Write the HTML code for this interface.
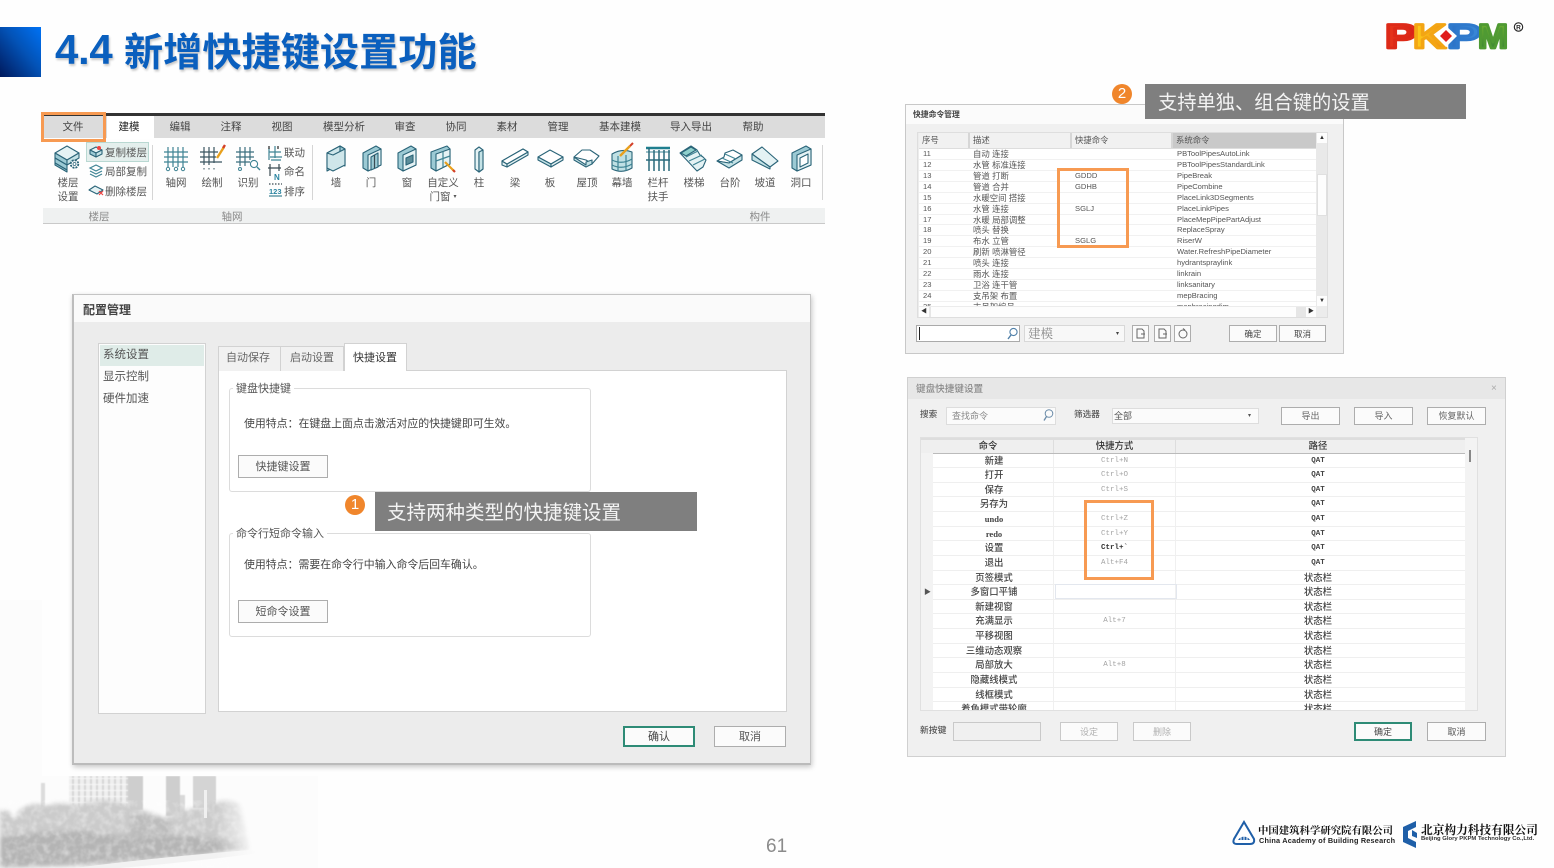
<!DOCTYPE html>
<html lang="zh-CN"><head><meta charset="utf-8"><title>4.4 新增快捷键设置功能</title>
<style>
*{box-sizing:border-box}
html,body{margin:0;padding:0;background:#fefefe}
body{width:1554px;height:868px;position:relative;overflow:hidden;font-family:"Liberation Sans","Noto Sans CJK SC",sans-serif;color:#444}
#w{position:absolute;left:0;top:0;width:1554px;height:868px;filter:blur(.35px)}
.a{position:absolute}
.t{position:absolute;white-space:nowrap;line-height:1}
.c{position:absolute;white-space:nowrap;line-height:1;transform:translateX(-50%)}
.tab{font-size:10.5px;top:122px;color:#444}
.lb{font-size:10.5px;color:#555}
.gl{font-size:10.5px;color:#8a8a8a;top:212px}
.btn{position:absolute;background:#fbfbfb;border:1px solid #adadad;display:flex;align-items:center;justify-content:center;line-height:1;color:#555;padding-top:1px}
.rib{position:absolute;left:0;top:0}
.rib .i{fill:#e4f2f4;stroke:#2a6478;stroke-width:1.1;stroke-linejoin:round}
.rib .d{fill:#9ccad4;stroke:#2a6478;stroke-width:1.1;stroke-linejoin:round}
.rib .m{fill:#c4e2e6;stroke:#2a6478;stroke-width:1.1;stroke-linejoin:round}
.rib .g{stroke:#3f8494;stroke-width:1.2;fill:none}
.rib .k{stroke:#3a4a52;stroke-width:1.2;fill:none}
.r2{display:flex;height:10.93px;font-size:7.6px;line-height:10.93px;border-bottom:1px solid #f1f1f1;color:#555;white-space:nowrap}
.r2 span{display:block;overflow:hidden}
.r2 span:nth-child(1){width:51px;padding-left:4px}
.r2 span:nth-child(2){width:102px;padding-left:3px;font-size:8.4px}
.r2 span:nth-child(3){width:101px;padding-left:3px}
.r2 span:nth-child(4){width:143px;padding-left:4px}
.r3{display:flex;height:14.63px;line-height:14px;font-size:9.4px;color:#444;border-bottom:1px solid #efefef;white-space:nowrap;text-align:center;font-weight:500}
.r3 b{display:block;width:121px;font-weight:500;border-right:1px solid #f0f0f0;padding-left:2px}
.r3 i{display:block;width:122px;font:7.5px/14px "Liberation Mono",monospace;color:#a3a3a3;border-right:1px solid #f0f0f0}
.r3 u{display:block;width:284px;text-decoration:none;color:#444}
.r3 u.q{font:bold 7.5px/14px "Liberation Mono",monospace}
.or{position:absolute;border:3px solid #f79a52}
.badge{position:absolute;width:20px;height:20px;border-radius:50%;background:#f0862c;color:#fff;font-size:15px;line-height:20px;text-align:center}
.lab{position:absolute;background:#7f7f7f;color:#f4f4f4;font-size:19.5px;white-space:nowrap;line-height:1}
</style></head><body>
<div id="w">

<!-- faint dotted background + city -->
<div class="a" style="left:0;top:600px;width:42px;height:176px;background:#fcfcfc"></div>
<svg class="a" style="left:0;top:776px" width="320" height="92" viewBox="0 776 320 92">
<defs>
<filter id="b1" x="-10%" y="-10%" width="120%" height="120%"><feGaussianBlur stdDeviation="2.2"/></filter>
<filter id="b2" x="-10%" y="-10%" width="120%" height="120%"><feGaussianBlur stdDeviation="0.6"/></filter>
<filter id="tx" x="0" y="0" width="100%" height="100%"><feTurbulence type="fractalNoise" baseFrequency="0.16" numOctaves="3" seed="4"/><feColorMatrix values="0 0 0 0 1  0 0 0 0 1  0 0 0 0 1  1.9 0 0 0 -0.75"/><feComposite in2="SourceAlpha" operator="in"/><feGaussianBlur stdDeviation="0.5"/></filter>
<linearGradient id="fd" x1="0" x2="1"><stop offset="0" stop-color="#fcfcfc" stop-opacity="0"/><stop offset="1" stop-color="#fcfcfc"/></linearGradient>
<pattern id="st" width="6" height="6" patternUnits="userSpaceOnUse"><rect width="6" height="6" fill="#efefef"/><rect width="2" height="6" fill="#d6d6d6"/><rect y="4" width="6" height="1" fill="#f8f8f8"/></pattern>
</defs>
<rect x="0" y="776" width="316" height="92" fill="#fcfcfc"/>
<g filter="url(#b2)">
<rect x="69" y="776" width="60" height="38" fill="url(#st)"/>
<rect x="128" y="776" width="15" height="34" fill="#cecece"/>
<rect x="166" y="776" width="14" height="40" fill="#cecece"/>
<rect x="180" y="795" width="5" height="22" fill="#d8d8d8"/>
<rect x="193" y="776" width="23" height="32" fill="#d4d4d4"/>
<rect x="41" y="783" width="4" height="24" fill="#dcdcdc"/>
</g>
<g filter="url(#b1)">
<path d="M0 810 Q10 808 14 820 L18 812 Q30 800 45 806 Q60 800 80 806 Q100 795 130 806 Q150 812 165 818 Q180 808 205 808 Q225 795 240 805 L250 848 Q170 862 100 866 L0 868Z" fill="#cbcbcb"/>
<path d="M0 838 Q60 825 120 836 Q180 832 240 842 L250 850 Q170 858 100 862 L0 868Z" fill="#b4b4b4"/>
<path d="M130 815 Q150 812 170 822 L170 838 L130 838Z" fill="#bcbcbc"/>
</g>
<rect x="0" y="800" width="255" height="68" fill="#bbb" opacity=".45" filter="url(#tx)"/>
<path d="M75 868 Q150 858 250 850 L260 853 Q190 862 120 868Z" fill="#f2f2f2"/>
<rect x="204" y="790" width="3" height="28" fill="#f0f0f0"/>
<rect x="215" y="776" width="43" height="92" fill="url(#fd)"/>
<rect x="258" y="776" width="60" height="92" fill="#fcfcfc"/>
</svg>

<!-- title -->
<div class="a" style="left:0;top:27px;width:41px;height:50px;background:linear-gradient(to top right,#00195c 0%,#0352b6 55%,#0072f5 100%)"></div>
<div class="t" style="left:55px;top:28px;font-size:42px;font-weight:700;color:#0a5fbe;text-shadow:1px 2px 2px rgba(0,0,0,.22);letter-spacing:-.3px;line-height:44px">4.4</div>
<div class="t" style="left:124px;top:28px;font-size:39.2px;font-weight:700;color:#0a5fbe;text-shadow:1px 2px 2px rgba(0,0,0,.22);line-height:44px;font-family:'Noto Sans CJK SC',sans-serif">新增快捷键设置功能</div>

<!-- PKPM logo -->
<svg class="a" style="left:1380px;top:14px" width="160" height="42" viewBox="1380 14 160 42">
<defs>
<linearGradient id="l1" x1="0" x2="1"><stop offset="0" stop-color="#e8381c"/><stop offset="1" stop-color="#d81f16"/></linearGradient>
<linearGradient id="l2" x1="0" x2="1"><stop offset="0" stop-color="#ffd21a"/><stop offset="1" stop-color="#ef8a12"/></linearGradient>
<linearGradient id="l3" x1="0" x2="1"><stop offset="0" stop-color="#2a6fc4"/><stop offset="1" stop-color="#3a8bd8"/></linearGradient>
<linearGradient id="l4" x1="0" y1="0" x2="0" y2="1"><stop offset="0" stop-color="#76b832"/><stop offset="1" stop-color="#2f7a34"/></linearGradient>
</defs>
<g font-family="Liberation Sans" font-weight="700" font-size="34.500" stroke-width="2.800" stroke-linejoin="round">
<text x="1385" y="48" fill="url(#l1)" stroke="#dd2a18" textLength="32" lengthAdjust="spacingAndGlyphs">P</text>
<text x="1413" y="48" fill="url(#l2)" stroke="#f3a514" textLength="33" lengthAdjust="spacingAndGlyphs">K</text>
<text x="1447" y="48" fill="url(#l3)" stroke="#2f79cc" textLength="34" lengthAdjust="spacingAndGlyphs">P</text>
<text x="1478" y="48" fill="url(#l4)" stroke="#4f9a33" textLength="30" lengthAdjust="spacingAndGlyphs">M</text>
</g>
<path d="M1446 26 L1457 36 L1446 47 L1435 36Z" fill="#fff"/>
<path d="M1446 30 L1452 36 L1446 42 L1440 36Z" fill="#e01d1d"/>
<circle cx="1518.5" cy="27" r="4.2" fill="none" stroke="#222" stroke-width="1.1"/>
<text x="1518.5" y="29.4" font-family="Liberation Sans" font-size="6.5" font-weight="700" fill="#222" text-anchor="middle">R</text>
</svg>

<!-- ribbon -->
<div class="a" style="left:43px;top:113px;width:782px;height:3px;background:#333"></div>
<div class="a" style="left:43px;top:116px;width:782px;height:22px;background:#dcdcdc"></div>
<div class="a" style="left:107px;top:116px;width:47px;height:23px;background:#fff"></div>
<div class="a" style="left:43px;top:208px;width:782px;height:16px;background:#eff1f1;border-bottom:1px solid #c9c9c9"></div>
<div class="a" style="left:41px;top:112px;width:65px;height:30px;border:3px solid #f79a52;background:transparent"></div>
<div class="c tab" style="left:73px">文件</div>
<div class="c tab" style="left:129px;color:#222">建模</div>
<div class="c tab" style="left:180px">编辑</div>
<div class="c tab" style="left:231px">注释</div>
<div class="c tab" style="left:282px">视图</div>
<div class="c tab" style="left:344px">模型分析</div>
<div class="c tab" style="left:405px">审查</div>
<div class="c tab" style="left:456px">协同</div>
<div class="c tab" style="left:507px">素材</div>
<div class="c tab" style="left:558px">管理</div>
<div class="c tab" style="left:620px">基本建模</div>
<div class="c tab" style="left:691px">导入导出</div>
<div class="c tab" style="left:753px">帮助</div>

<div class="a" style="left:86px;top:142px;width:63px;height:20px;background:#e4efed;border:1px solid #b9d8d2"></div>
<div class="a" style="left:152px;top:145px;width:1px;height:55px;background:#d5d5d5"></div>
<div class="a" style="left:312px;top:145px;width:1px;height:55px;background:#d5d5d5"></div>
<div class="a" style="left:822px;top:145px;width:1px;height:55px;background:#d5d5d5"></div>

<svg class="rib" width="1554" height="230">
<!-- floor settings -->
<path class="i" d="M55 153 L67 146 L79 153 L67 160Z"/>
<path class="d" d="M55 153 L67 160 V165 L55 158Z"/><path class="m" d="M67 160 L79 153 V158 L67 165Z"/>
<path class="d" d="M55 158 L67 165 V170 L55 163Z"/>
<path class="d" d="M55 163 L67 170 V172 L55 165Z"/>
<circle cx="74.500" cy="164" r="3.800" fill="#fff" stroke="#2a6478" stroke-width="1.800" stroke-dasharray="2 1"/><circle cx="74.500" cy="164" r="1.500" fill="#fff" stroke="#2a6478" stroke-width=".8"/>
<!-- small floor icons -->
<path class="i" d="M90 150 L96 147 L102 150 L96 153Z"/><path class="d" d="M90 150 V154 L96 157 V153Z"/><path class="m" d="M96 157 L102 154 V150 L96 153Z"/><circle cx="99" cy="148" r="2" fill="#e44"/>
<path class="g" d="M90 168 L96 165 L102 168 L96 171Z M90 171 L96 174 L102 171 M90 174 L96 177 L102 174"/>
<path class="i" d="M89 190 L95 186 L103 190 L97 194Z"/><path stroke="#e44" stroke-width="1.200" d="M99 191 L103 195 M103 191 L99 195"/>
<!-- grids -->
<g class="g"><path d="M164 152 H188 M164 157 H188 M164 162 H188 M168 147 V167 M173 147 V167 M178 147 V167 M183 147 V167" stroke-dasharray="none"/></g>
<g fill="none" stroke="#3f8494" stroke-width="1"><circle cx="168" cy="169" r="1.700"/><circle cx="176" cy="169" r="1.700"/><circle cx="183" cy="169" r="1.700"/></g>
<path class="g" style="stroke:#3a5560" d="M200 152 H218 M200 157 H216 M200 162 H222 M204 147 V165 M209 147 V165 M214 147 V163"/>
<path d="M217 158 L224 147" stroke="#e8a01c" stroke-width="2.400"/><path d="M223 148 L225 145" stroke="#d3402a" stroke-width="2.400"/>
<path d="M204 168 v1.500 M209 168 v1.500 M214 168 v1.500" stroke="#3a5560"/>
<path class="g" style="stroke:#3a6e7e" d="M236 152 H254 M236 157 H254 M236 162 H250 M240 147 V166 M245 147 V166 M250 147 V160"/>
<circle cx="254" cy="164" r="3.600" fill="#fff" stroke="#3f8494" stroke-width="1.100"/><path d="M257 167 L260 170" stroke="#3f8494" stroke-width="1.400"/>
<circle cx="240" cy="169" r="1.500" fill="none" stroke="#3f8494"/>
<!-- link/name/order -->
<path class="g" d="M269 148 v12 M275 146 v12 M269 152 h12 M270 157 h12 M271 160 h10"/>
<path d="M269 146 v3 M278 146 v3" stroke="#222" stroke-width="1.200"/>
<path class="k" d="M270 164 v12 M279 164 v7 M268 168 h13"/><text x="274" y="180" font-family="Liberation Sans" font-size="8" font-weight="700" fill="#2a84a0">N</text>
<path class="k" stroke-dasharray="1.500 1.500" d="M269 184 H282"/><text x="269" y="194" font-family="Liberation Sans" font-size="7.500" font-weight="700" fill="#2a84a0">123</text><path class="g" d="M269 196 H282"/>
<!-- wall -->
<path class="m" d="M327 153 L340 146 L345 149 L332 156Z"/><path class="i" style="fill:#cfe6ea" d="M327 153 L340 146 V164 L327 171Z"/><path class="d" d="M340 146 L345 149 V166 L340 164Z"/><path class="i" style="fill:#cfe6ea" d="M327 153 L327 168 L333 171 L345 165 V149 L333 155Z"/>
<!-- door -->
<path class="d" d="M363 153 L376 146 L381 149 V165 L368 171 L363 168Z"/><path class="i" d="M368 155 L381 149 V165 L368 171Z"/><path class="d" d="M371 157 L378 153 V167 L371 170Z"/><path class="k" d="M374.500 155 V168"/>
<!-- window -->
<path class="d" d="M398 153 L411 146 L416 149 V165 L403 171 L398 168Z"/><path class="i" d="M403 155 L416 149 V165 L403 171Z"/><path class="d" style="fill:#5c8e9a" d="M406 158 L413 155 V162 L406 165Z"/>
<!-- custom -->
<path class="d" d="M431 152 L447 146 L450 149 V164 L436 171 L431 168Z"/><path class="i" d="M436 154 L450 149 V164 L436 171Z"/><path class="g" d="M443 151.500 V167.500 M436 161 L450 156"/><path d="M445 162 L454 171" stroke="#e8a01c" stroke-width="2.200"/><path d="M453 170 L455 172" stroke="#d3402a" stroke-width="2.200"/>
<!-- column -->
<path class="i" d="M475 150 L479 147 L483 150 V169 L479 172 L475 169Z"/><path class="k" style="stroke:#2a6478" d="M479 152 V172"/><path class="m" d="M479 152 L483 150 V169 L479 172Z"/>
<!-- beam -->
<path class="m" d="M502 161 L523 149 L528 152 L507 164Z"/><path class="i" d="M502 161 L507 164 V167 L502 165Z"/><path class="i" d="M507 164 L528 152 V155 L507 167Z"/><path class="i" style="fill:#fff" d="M502 161 L523 149 L528 152 L507 164Z"/>
<!-- slab -->
<path class="i" style="fill:#fff" d="M538 157 L550 150 L563 157 L551 164Z"/><path class="m" d="M538 157 L551 164 V167 L538 160Z"/><path class="i" d="M551 164 L563 157 V160 L551 167Z"/>
<!-- roof -->
<path class="i" style="fill:#fff" d="M574 157 L582 150 L590 150 L599 156 L592 164 L586 160 Z"/><path class="m" d="M574 157 L586 165 L586 162 L592 160 V164 L586 167 L574 160Z"/>
<!-- curtain wall -->
<path class="i" style="fill:#bfe0e4" d="M612 154 Q622 148 632 152 V168 Q622 174 612 169Z"/><path class="g" d="M612 160 Q622 165 632 159 M612 165 Q622 170 632 164 M618 156 V171 M626 155 V171"/><path d="M620 156 L630 146" stroke="#e8a01c" stroke-width="2.400"/><path d="M630 146 L633 143" stroke="#d3402a" stroke-width="2"/>
<!-- railing -->
<path d="M646 148 H670" stroke="#1f7f8f" stroke-width="2.400"/><path d="M646 152 H670" stroke="#3f8494"/><path class="g" style="stroke-width:1.500;stroke:#2a6a7c" d="M649 148 V171 M654 150 V171 M659 150 V171 M664 150 V171 M669 150 V171 M646 160 H670"/>
<!-- stairs -->
<path class="i" d="M680 153 L691 146 L697 150 L700 155 L703 157 L706 160 L703 167 L697 171Z"/><path class="d" style="fill:#8fd0cc" d="M681 153 L691 147 L696 150 L686 156Z"/><path class="g" d="M686 157 L698 151 M689 161 L702 155 M693 165 L705 159"/>
<!-- steps -->
<path class="i" style="fill:#fff" d="M717 161 L724 157 L725 153 L733 150 L742 155 L729 163Z"/><path class="m" d="M717 161 L729 168 L742 160 V155 L729 163Z"/>
<path class="g" d="M722 158 L733 163 M725 154 L736 159"/>
<!-- ramp -->
<path class="i" d="M752 154 L762 147 L778 161 L770 167Z"/><path class="m" d="M752 154 L770 167 L770 169 L752 160Z"/>
<!-- opening -->
<path class="d" d="M792 153 L806 146 L811 149 V165 L797 171 L792 168Z"/><path class="i" d="M797 155 L811 149 V165 L797 171Z"/><path class="m" style="fill:#fff" d="M800 158 L808 154 V163 L800 167Z"/>
</svg>

<div class="c lb" style="left:68px;top:178px">楼层</div><div class="c lb" style="left:68px;top:192px">设置</div>
<div class="t lb" style="left:105px;top:147.5px">复制楼层</div>
<div class="t lb" style="left:105px;top:166.5px">局部复制</div>
<div class="t lb" style="left:105px;top:186.5px">删除楼层</div>
<div class="c lb" style="left:176px;top:178px">轴网</div>
<div class="c lb" style="left:212px;top:178px">绘制</div>
<div class="c lb" style="left:248px;top:178px">识别</div>
<div class="t lb" style="left:284px;top:147.5px">联动</div>
<div class="t lb" style="left:284px;top:166.5px">命名</div>
<div class="t lb" style="left:284px;top:186.5px">排序</div>
<div class="c lb" style="left:336px;top:178px">墙</div>
<div class="c lb" style="left:371px;top:178px">门</div>
<div class="c lb" style="left:407px;top:178px">窗</div>
<div class="c lb" style="left:443px;top:178px">自定义</div><div class="c lb" style="left:443px;top:192px">门窗 <span style="font-size:6px;vertical-align:2px">▾</span></div>
<div class="c lb" style="left:479px;top:178px">柱</div>
<div class="c lb" style="left:515px;top:178px">梁</div>
<div class="c lb" style="left:550px;top:178px">板</div>
<div class="c lb" style="left:587px;top:178px">屋顶</div>
<div class="c lb" style="left:622px;top:178px">幕墙</div>
<div class="c lb" style="left:658px;top:178px">栏杆</div><div class="c lb" style="left:658px;top:192px">扶手</div>
<div class="c lb" style="left:694px;top:178px">楼梯</div>
<div class="c lb" style="left:730px;top:178px">台阶</div>
<div class="c lb" style="left:765px;top:178px">坡道</div>
<div class="c lb" style="left:801px;top:178px">洞口</div>
<div class="c gl" style="left:99px">楼层</div><div class="c gl" style="left:232px">轴网</div><div class="c gl" style="left:760px">构件</div>

<!-- dialog 1 -->
<div class="a" style="left:72px;top:294px;width:739px;height:471px;background:#ececec;border:1px solid #c4c4c4;border-left:2px solid #bdbdbd;border-bottom:2px solid #bbb;box-shadow:1px 2px 5px rgba(0,0,0,.22)"></div>
<div class="a" style="left:74px;top:295px;width:736px;height:27px;background:#fafafa"></div>
<div class="t" style="left:83px;top:304px;font-size:12px;font-weight:700;color:#444">配置管理</div>
<div class="a" style="left:98px;top:343px;width:108px;height:371px;background:#fdfdfd;border:1px solid #d2d2d2"></div>
<div class="a" style="left:100px;top:345px;width:104px;height:21px;background:#dfece8"></div>
<div class="t" style="left:103px;top:350px;font-size:11.5px;color:#555">系统设置</div>
<div class="t" style="left:103px;top:372px;font-size:11.5px;color:#555">显示控制</div>
<div class="t" style="left:103px;top:394px;font-size:11.5px;color:#555">硬件加速</div>
<div class="a" style="left:218px;top:370px;width:569px;height:342px;background:#fff;border:1px solid #d2d2d2"></div>
<div class="a" style="left:218px;top:346px;width:63px;height:25px;background:#f1f1f1;border:1px solid #d2d2d2;border-bottom:0"></div>
<div class="a" style="left:281px;top:346px;width:63px;height:25px;background:#f1f1f1;border:1px solid #d2d2d2;border-bottom:0;border-left:0"></div>
<div class="a" style="left:344px;top:343px;width:63px;height:28px;background:#fff;border:1px solid #d2d2d2;border-bottom:0"></div>
<div class="c" style="left:248px;top:353px;font-size:11px;color:#666">自动保存</div>
<div class="c" style="left:312px;top:353px;font-size:11px;color:#666">启动设置</div>
<div class="c" style="left:375px;top:353px;font-size:11px;color:#333">快捷设置</div>

<div class="a" style="left:229px;top:388px;width:362px;height:104px;border:1px solid #dcdcdc;border-radius:3px"></div>
<div class="t" style="left:233px;top:384px;background:#fff;padding:0 3px;font-size:11px;color:#555">键盘快捷键</div>
<div class="t" style="left:244px;top:419px;font-size:10.9px;color:#444">使用特点：在键盘上面点击激活对应的快捷键即可生效。</div>
<div class="btn" style="left:238px;top:455px;width:90px;height:23px;font-size:11px">快捷键设置</div>

<div class="a" style="left:229px;top:533px;width:362px;height:104px;border:1px solid #dcdcdc;border-radius:3px"></div>
<div class="t" style="left:233px;top:529px;background:#fff;padding:0 3px;font-size:11px;color:#555">命令行短命令输入</div>
<div class="t" style="left:244px;top:560px;font-size:10.9px;color:#444">使用特点：需要在命令行中输入命令后回车确认。</div>
<div class="btn" style="left:238px;top:600px;width:90px;height:23px;font-size:11px">短命令设置</div>

<div class="btn" style="left:623px;top:726px;width:72px;height:21px;font-size:11px;border:2px solid #2e8b76;color:#444;padding-top:2px">确认</div>
<div class="btn" style="left:714px;top:726px;width:72px;height:21px;font-size:11px;padding-top:2px">取消</div>

<div class="badge" style="left:345px;top:495px">1</div>
<div class="lab" style="left:375px;top:492px;width:322px;height:39px;padding:12px 0 0 12px">支持两种类型的快捷键设置</div>

<!-- dialog 2 -->
<div class="a" style="left:905px;top:104px;width:439px;height:250px;background:#f0f0f0;border:1px solid #c8c8c8"></div>
<div class="a" style="left:906px;top:105px;width:437px;height:19px;background:#fbfbfb"></div>
<div class="t" style="left:913px;top:111px;font-size:7.8px;font-weight:700;color:#444">快捷命令管理</div>
<div class="a" style="left:917px;top:132px;width:411px;height:186px;background:#ececec;border:1px solid #dedede"></div>
<div class="a" style="left:919px;top:133px;width:397px;height:173px;background:#fff;overflow:hidden">
 <div style="display:flex;height:16px;font-size:8.4px;line-height:15px;color:#555;background:#f1f1f1;border-bottom:1px solid #ddd">
  <div style="width:51px;padding-left:3px;border-right:2px solid #d6d6d6">序号</div><div style="width:102px;padding-left:3px;border-right:2px solid #d6d6d6">描述</div><div style="width:101px;padding-left:3px;border-right:2px solid #d6d6d6">快捷命令</div><div style="width:143px;padding-left:3px;background:#c9c9c9">系统命令</div>
 </div>
 <div class="r2"><span>11</span><span>自动 连接</span><span></span><span>PBToolPipesAutoLink</span></div>
 <div class="r2"><span>12</span><span>水管 标准连接</span><span></span><span>PBToolPipesStandardLink</span></div>
 <div class="r2"><span>13</span><span>管道 打断</span><span>GDDD</span><span>PipeBreak</span></div>
 <div class="r2"><span>14</span><span>管道 合并</span><span>GDHB</span><span>PipeCombine</span></div>
 <div class="r2"><span>15</span><span>水暖空间 搭接</span><span></span><span>PlaceLink3DSegments</span></div>
 <div class="r2"><span>16</span><span>水管 连接</span><span>SGLJ</span><span>PlaceLinkPipes</span></div>
 <div class="r2"><span>17</span><span>水暖 局部调整</span><span></span><span>PlaceMepPipePartAdjust</span></div>
 <div class="r2"><span>18</span><span>喷头 替换</span><span></span><span>ReplaceSpray</span></div>
 <div class="r2"><span>19</span><span>布水 立管</span><span>SGLG</span><span>RiserW</span></div>
 <div class="r2"><span>20</span><span>刷新 喷淋管径</span><span></span><span>Water.RefreshPipeDiameter</span></div>
 <div class="r2"><span>21</span><span>喷头 连接</span><span></span><span>hydrantspraylink</span></div>
 <div class="r2"><span>22</span><span>雨水 连接</span><span></span><span>linkrain</span></div>
 <div class="r2"><span>23</span><span>卫浴 连干管</span><span></span><span>linksanitary</span></div>
 <div class="r2"><span>24</span><span>支吊架 布置</span><span></span><span>mepBracing</span></div>
 <div class="r2"><span>25</span><span>支吊架编号</span><span></span><span>mepbracingdim</span></div>
</div>
<div class="a" style="left:1316px;top:133px;width:11px;height:173px;background:#e9e9e9"></div>
<div class="a" style="left:1317px;top:133px;width:10px;height:10px;background:#fdfdfd;font-size:6px;line-height:10px;text-align:center;color:#333">▲</div>
<div class="a" style="left:1317px;top:296px;width:10px;height:10px;background:#fdfdfd;font-size:6px;line-height:10px;text-align:center;color:#333">▼</div>
<div class="a" style="left:1317px;top:174px;width:10px;height:42px;background:#fdfdfd;border:1px solid #e0e0e0"></div>
<div class="a" style="left:919px;top:307px;width:397px;height:10px;background:#e6e6e6"></div>
<div class="a" style="left:931px;top:307px;width:365px;height:10px;background:#fdfdfd"></div>
<div class="a" style="left:919px;top:307px;width:10px;height:10px;background:#fdfdfd;font-size:6px;line-height:10px;text-align:center;color:#333">◀</div>
<div class="a" style="left:1306px;top:307px;width:10px;height:10px;background:#fdfdfd;font-size:6px;line-height:10px;text-align:center;color:#333">▶</div>
<div class="a" style="left:916px;top:325px;width:104px;height:17px;background:#fff;border:1px solid #aaa"></div>
<div class="a" style="left:919px;top:327px;width:1px;height:13px;background:#222"></div>
<svg class="a" style="left:1006px;top:327px" width="13" height="13"><circle cx="7.500" cy="5" r="3.600" fill="none" stroke="#4f7fa8" stroke-width="1.100"/><path d="M5 8 L2 12" stroke="#4f7fa8" stroke-width="1.400"/></svg>
<div class="a" style="left:1024px;top:325px;width:101px;height:17px;background:#f8f8f8;border:1px solid #d8d8d8"></div>
<div class="t" style="left:1028px;top:327px;font-size:12.5px;color:#888;font-family:'Noto Serif CJK SC',serif">建模</div>
<div class="t" style="left:1116px;top:331px;font-size:6px;color:#444">▾</div>
<div class="btn" style="left:1132px;top:325px;width:17px;height:17px"></div>
<div class="btn" style="left:1154px;top:325px;width:17px;height:17px"></div>
<div class="btn" style="left:1174px;top:325px;width:17px;height:17px"></div>
<svg class="a" style="left:1132px;top:325px" width="60" height="17" fill="none" stroke="#666" stroke-width="1"><path d="M5 4 H10 L12 6 V13 H5Z M9 9 H13"/><path d="M27 4 H32 L34 6 V13 H27Z M31 9 H35"/><circle cx="51" cy="9" r="4"/><path d="M51 3.500 L53 5"/></svg>
<div class="btn" style="left:1229px;top:325px;width:48px;height:17px;font-size:8.5px;color:#444">确定</div>
<div class="btn" style="left:1279px;top:325px;width:47px;height:17px;font-size:8.5px;color:#444">取消</div>
<div class="or" style="left:1057px;top:168px;width:72px;height:80px"></div>
<div class="badge" style="left:1112px;top:84px">2</div>
<div class="lab" style="left:1145px;top:84px;width:321px;height:35px;padding:10px 0 0 13px;font-size:19.25px">支持单独、组合键的设置</div>

<!-- dialog 3 -->
<div class="a" style="left:907px;top:377px;width:599px;height:380px;background:#f0f0f0;border:1px solid #d0d0d0"></div>
<div class="a" style="left:908px;top:378px;width:597px;height:21px;background:#e7e7e7"></div>
<div class="t" style="left:916px;top:385px;font-size:9.6px;color:#8a8a8a;font-weight:500">键盘快捷键设置</div>
<div class="t" style="left:1491px;top:384px;font-size:10px;color:#aaa">×</div>
<div class="t" style="left:920px;top:410px;font-size:8.6px;color:#555;font-weight:500">搜索</div>
<div class="a" style="left:946px;top:407px;width:110px;height:18px;background:#fbfbfb;border:1px solid #ddd"></div>
<div class="t" style="left:952px;top:412px;font-size:9px;color:#888">查找命令</div>
<svg class="a" style="left:1041px;top:408px" width="14" height="14"><circle cx="8" cy="5.500" r="3.800" fill="none" stroke="#6a8ba8" stroke-width="1"/><path d="M5.500 8.500 L3 12.500" stroke="#6a8ba8" stroke-width="1.300"/></svg>
<div class="t" style="left:1074px;top:410px;font-size:8.6px;color:#555;font-weight:500">筛选器</div>
<div class="a" style="left:1112px;top:408px;width:147px;height:16px;background:#fbfbfb;border:1px solid #ddd"></div>
<div class="t" style="left:1114px;top:412px;font-size:9px;color:#555">全部</div>
<div class="t" style="left:1248px;top:413px;font-size:6px;color:#555">▾</div>
<div class="btn" style="left:1281px;top:407px;width:59px;height:18px;font-size:9px;color:#666">导出</div>
<div class="btn" style="left:1354px;top:407px;width:59px;height:18px;font-size:9px;color:#666">导入</div>
<div class="btn" style="left:1427px;top:407px;width:59px;height:18px;font-size:9px;color:#666">恢复默认</div>

<div class="a" style="left:920px;top:437px;width:558px;height:274px;background:#f3f3f3;border:1px solid #e0e0e0"></div>
<div class="a" style="left:921px;top:438px;width:544px;height:272px;background:#fff;overflow:hidden">
 <div style="display:flex;height:15.5px;background:#efefef;border-top:2px solid #ddd;border-bottom:1px solid #bbb;font-size:9.4px;line-height:12px;text-align:center;color:#333;font-weight:500">
  <div style="width:133px;border-right:1px solid #ddd;padding-left:2px">命令</div><div style="width:122px;border-right:1px solid #ddd">快捷方式</div><div style="width:284px">路径</div>
 </div>
 <div style="position:absolute;left:0;top:15px;width:12px;height:258px;background:#f3f3f3"></div>
 <div style="position:absolute;left:3px;top:151px;font-size:7px;line-height:1;color:#555">▶</div>
 <div style="position:absolute;left:134px;top:146px;width:122px;height:15px;border:1px solid #e3e7ee"></div>
 <div style="margin-left:12px">
 <div class="r3"><b>新建</b><i>Ctrl+N</i><u class="q">QAT</u></div>
 <div class="r3"><b>打开</b><i>Ctrl+O</i><u class="q">QAT</u></div>
 <div class="r3"><b>保存</b><i>Ctrl+S</i><u class="q">QAT</u></div>
 <div class="r3"><b>另存为</b><i></i><u class="q">QAT</u></div>
 <div class="r3"><b style="font:bold 8.5px/14px 'Liberation Serif',serif">undo</b><i>Ctrl+Z</i><u class="q">QAT</u></div>
 <div class="r3"><b style="font:bold 8.5px/14px 'Liberation Serif',serif">redo</b><i>Ctrl+Y</i><u class="q">QAT</u></div>
 <div class="r3"><b>设置</b><i style="color:#333;font-weight:700">Ctrl+`</i><u class="q">QAT</u></div>
 <div class="r3"><b>退出</b><i>Alt+F4</i><u class="q">QAT</u></div>
 <div class="r3"><b>页签模式</b><i></i><u>状态栏</u></div>
 <div class="r3"><b>多窗口平铺</b><i></i><u>状态栏</u></div>
 <div class="r3"><b>新建视窗</b><i></i><u>状态栏</u></div>
 <div class="r3"><b>充满显示</b><i>Alt+7</i><u>状态栏</u></div>
 <div class="r3"><b>平移视图</b><i></i><u>状态栏</u></div>
 <div class="r3"><b>三维动态观察</b><i></i><u>状态栏</u></div>
 <div class="r3"><b>局部放大</b><i>Alt+8</i><u>状态栏</u></div>
 <div class="r3"><b>隐藏线模式</b><i></i><u>状态栏</u></div>
 <div class="r3"><b>线框模式</b><i></i><u>状态栏</u></div>
 <div class="r3"><b>着色模式带轮廓</b><i></i><u>状态栏</u></div>
 </div>
</div>
<div class="a" style="left:1469px;top:450px;width:2px;height:12px;background:#888"></div>
<div class="or" style="left:1084px;top:500px;width:70px;height:80px"></div>
<div class="t" style="left:920px;top:726px;font-size:8.8px;color:#555;font-weight:500">新按键</div>
<div class="a" style="left:953px;top:722px;width:88px;height:19px;background:#f0f0f0;border:1px solid #c9c9c9"></div>
<div class="btn" style="left:1060px;top:722px;width:58px;height:19px;font-size:9px;color:#b0b0b0;border-color:#c9c9c9">设定</div>
<div class="btn" style="left:1133px;top:722px;width:58px;height:19px;font-size:9px;color:#b0b0b0;border-color:#c9c9c9">删除</div>
<div class="btn" style="left:1354px;top:722px;width:58px;height:19px;font-size:9px;border:2px solid #2e8b76;color:#444">确定</div>
<div class="btn" style="left:1427px;top:722px;width:59px;height:19px;font-size:9px;color:#555">取消</div>

<!-- page number -->
<div class="t" style="left:766px;top:837px;font-size:19px;color:#8b8b8b">61</div>

<!-- footer logos -->
<svg class="a" style="left:1230px;top:818px" width="190" height="30">
<path d="M14 4 L24 21 Q25 26 20 26 H7 Q2 26 4 21Z" fill="#fff" stroke="#1f5fa8" stroke-width="2"/>
<path d="M8 22 A7 7 0 0 1 20 22Z" fill="#1f5fa8"/><path d="M11 13 V22 M14 11 V22 M17 13 V22" stroke="#fff" stroke-width="1"/>
<path d="M186 4 V10 L178 14 V21 L186 25 V31 L173 25 V10Z" fill="#1f5fa8" transform="translate(0,-1)"/>
<path d="M182 12 L187 15 V20 L182 18Z" fill="#1f5fa8"/>
</svg>
<div class="t" style="left:1258px;top:825px;font-size:10.4px;font-weight:700;color:#111;font-family:'Noto Serif CJK SC',serif">中国建筑科学研究院有限公司</div>
<div class="t" style="left:1259px;top:836.500px;font-size:7.3px;font-weight:700;color:#222;letter-spacing:.2px">China Academy of Building Research</div>
<div class="t" style="left:1421px;top:825px;font-size:11.700px;font-weight:700;color:#111;font-family:'Noto Serif CJK SC',serif">北京构力科技有限公司</div>
<div class="t" style="left:1421px;top:837px;font-size:5.900px;font-weight:700;color:#333">Beijing Glory PKPM Technology Co.,Ltd.</div>
</div>
</body></html>
